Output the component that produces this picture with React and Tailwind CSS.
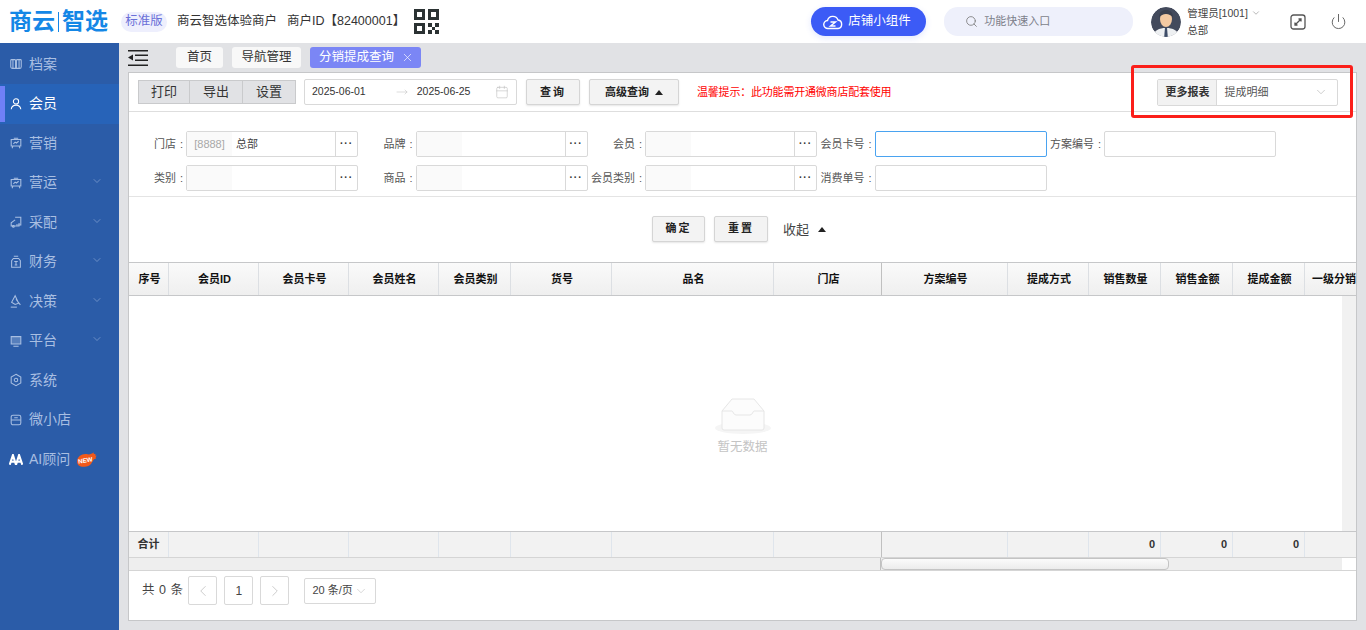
import { ChevronDown, ChevronLeft, ChevronRight, MoveRight, Calendar, Search, X, Power } from 'lucide-react';

// sidebar icons, hand drawn to follow the original glyphs
const icons = {
  file: (
    <>
      <path d="M3 3h3.500a1 1 0 0 1 1 1v9H4a2 2 0 0 1-2-2V4a1 1 0 0 1 1-1zM13 3H9.500a1 1 0 0 0-1 1v9H12a2 2 0 0 0 2-2V4a1 1 0 0 0-1-1z" />
      <path d="M4.500 3v10M11.500 3v10" />
    </>
  ),
  user: (
    <>
      <circle cx="8" cy="5" r="3" />
      <path d="M2.500 14c.5-3 2.800-4.700 5.500-4.700s5 1.700 5.500 4.700" />
    </>
  ),
  board: (
    <>
      <path d="M5.500 2.500h5M2.500 4h11v7.500h-11zM4.500 11.500 3.500 14M11.500 11.500l1 2.500" />
      <path d="m5 9 2-2 1.500 1L11 6" />
    </>
  ),
  bag: (
    <>
      <path d="M7 2.500h6.500v9H8" />
      <path d="M7 5.500 2.500 9v3.500h9V9" />
      <circle cx="5" cy="13" r="1" />
    </>
  ),
  money: (
    <>
      <path d="M5.500 1.500h5M5 4h6l2 2.500V14H3V6.500z" />
      <path d="M6 7.500h4M8 7.500v4M6.500 11.500h3" />
    </>
  ),
  scale: (
    <>
      <path d="M7 2 3 9.500l4 2.500 4-1.500zM8 6l5 6.500" />
      <path d="M2 15h7" />
    </>
  ),
  screen: (
    <>
      <path d="M2.500 3h11v8.500h-11z" fill="currentColor" fillOpacity=".35" />
      <path d="M5 14h6" />
    </>
  ),
  gear: (
    <>
      <path d="M8 1.500 13.500 4.500v7L8 14.500l-5.500-3v-7z" />
      <circle cx="8" cy="8" r="2" />
    </>
  ),
  shop: (
    <>
      <rect x="2.500" y="2.500" width="11" height="11" rx="2" />
      <path d="M2.500 8h11M6 5.500h4" />
    </>
  ),
};

const menu = [
  { name: '档案', icon: 'file' },
  { name: '会员', icon: 'user', active: true },
  { name: '营销', icon: 'board' },
  { name: '营运', icon: 'board', arrow: true },
  { name: '采配', icon: 'bag', arrow: true },
  { name: '财务', icon: 'money', arrow: true },
  { name: '决策', icon: 'scale', arrow: true },
  { name: '平台', icon: 'screen', arrow: true },
  { name: '系统', icon: 'gear' },
  { name: '微小店', icon: 'shop' },
];

const columns = [
  { w: 'w-[40px]', name: '序号', foot: '合计' },
  { w: 'w-[90px]', name: '会员ID' },
  { w: 'w-[90px]', name: '会员卡号' },
  { w: 'w-[90px]', name: '会员姓名' },
  { w: 'w-[72px]', name: '会员类别' },
  { w: 'w-[101px]', name: '货号' },
  { w: 'w-[162px]', name: '品名' },
  { w: 'w-[108px]', name: '门店', frozen: true },
  { w: 'w-[126px]', name: '方案编号' },
  { w: 'w-[81px]', name: '提成方式' },
  { w: 'w-[72px]', name: '销售数量', foot: '0' },
  { w: 'w-[72px]', name: '销售金额', foot: '0' },
  { w: 'w-[72px]', name: '提成金额', foot: '0' },
  { w: 'w-[52px] pl-[5px]', name: '一级分销' },
];

const SideIcon = ({ name }) => (
  <svg viewBox="0 0 16 16" className="w-[14px] h-[14px] shrink-0" fill="none" stroke="currentColor" strokeWidth="1.200">
    {icons[name]}
  </svg>
);

const SideItem = ({ item }) => (
  <div className={`relative flex items-center h-[39.5px] pl-[9px] ${item.active ? 'bg-[#2763b8] text-white' : 'text-[#a9bfe2]'}`}>
    {item.active && <div className="absolute left-0 top-[2px] bottom-[2px] w-[5px] bg-[#6f80f6]" />}
    <SideIcon name={item.icon} />
    <span className="ml-[6px] text-[14px]">{item.name}</span>
    {item.arrow && <ChevronDown size={12} strokeWidth={1} className="absolute left-[91px] top-[12px]" />}
  </div>
);

const Picker = ({ code, value }) => (
  <div className="flex w-[172px] h-[26px] bg-white border border-[#d9d9d9] rounded-[2px] text-[11px]">
    <div className="w-[45px] bg-[#fafafa] text-[#a8a8a8] flex items-center justify-center">{code}</div>
    <div className="flex-1 flex items-center pl-[4px] text-[#444]">{value}</div>
    <div className="w-[22px] border-l border-[#d9d9d9] flex items-center justify-center text-[#333] font-bold tracking-[1px] text-[10px] leading-none">···</div>
  </div>
);

const TextBox = ({ focus }) => (
  <div className={`w-[172px] h-[26px] bg-white border rounded-[2px] ${focus ? 'border-[#4aa3f0]' : 'border-[#d9d9d9]'}`} />
);

const Field = ({ label, children }) => (
  <div className="flex items-center">
    <div className="w-[57px] shrink-0 pr-[3px] flex justify-end text-[11px] text-[#555] whitespace-nowrap">
      {label}<span className="ml-[4px]">:</span>
    </div>
    {children}
  </div>
);

const ActionBtn = ({ children, className }) => (
  <button className={`h-[26px] border border-[#d5d5d5] bg-[#f3f3f3] rounded-[2px] text-[11px] font-bold text-[#222] shadow-[0_1px_2px_rgba(0,0,0,0.1)] ${className}`}>
    {children}
  </button>
);

const Triangle = () => <span className="inline-block w-0 h-0 border-x-[4px] border-x-transparent border-b-[5px] border-b-[#222]" />;

const App = () => {
  return (
    <div className="relative w-[1366px] h-[630px] overflow-hidden flex flex-col bg-[#e1e2e5] text-[#333] font-['Liberation_Sans','Noto_Sans_CJK_SC',sans-serif]">
      {/* top bar */}
      <header className="h-[43px] shrink-0 bg-white flex items-center">
        <div className="ml-[9px] w-[99px] flex items-center text-[#1487e6] text-[23px] font-bold leading-none whitespace-nowrap">
          商云<span className="w-px h-[20px] mx-[3px] bg-[#1487e6]" />智选
        </div>
        <div className="ml-[13px] w-[46px] h-[20px] rounded-full bg-[#eeeffd] text-[#6b70d8] text-[12.500px] flex items-center justify-center">标准版</div>
        <span className="ml-[10px] text-[12.500px] text-[#333]">商云智选体验商户</span>
        <span className="ml-[10px] text-[12.500px] text-[#333] whitespace-nowrap">商户ID【82400001】</span>
        <svg viewBox="0 0 25 25" className="ml-[9px] w-[25px] h-[25px] text-[#2b3233]" fill="currentColor">
          <path fillRule="evenodd" d="M0 0h11v11H0zM3 3v5h5V3zM14 0h11v11H14zM17 3v5h5V3zM0 14h11v11H0zM3 17v5h5v-5z" />
          <path d="M14 14h4v4h-4zM21 14h4v4h-4zM18 18h3v3h-3zM14 21h4v4h-4zM21 21h4v4h-4z" />
        </svg>
        <button className="ml-[372px] w-[115px] h-[29px] rounded-full bg-[#3c5bf6] text-white text-[12.500px] flex items-center pl-[12px] shadow-[0_2px_6px_rgba(60,91,246,0.15)]">
          <svg viewBox="0 0 20 16" className="w-[20px] h-[16px] mr-[5px]" fill="none" stroke="currentColor" strokeWidth="1.400">
            <path d="M5 14.500a4 4 0 0 1-.5-8A5.500 5.500 0 0 1 15 6a4.300 4.300 0 0 1 0 8.500z" />
            <path d="M7.500 8h5l-5 4h5" />
          </svg>
          店铺小组件
        </button>
        <div className="ml-[18px] w-[189px] h-[29px] rounded-[14px] bg-[#eef0fb] flex items-center pl-[21px] text-[11px] text-[#7d7f8a]">
          <Search size={13} strokeWidth={1.500} className="text-[#777] mr-[6px]" />
          功能快速入口
        </div>
        <svg viewBox="0 0 30 30" className="ml-[18px] w-[30px] h-[30px] rounded-full">
          <circle cx="15" cy="15" r="15" fill="#434a5c" />
          <path d="M2 30c1-7 6-9 13-9s12 2 13 9z" fill="#eef0f2" />
          <ellipse cx="15" cy="12" rx="6" ry="8" fill="#f3c9a2" />
          <path d="M8 11c0-6 3-8 7-8s7 2 7 8c-2-3-4-4-7-4s-5 1-7 4z" fill="#3a3f4e" />
          <path d="M14 20.500h2l.8 9.500h-3.600z" fill="#3e4d68" />
        </svg>
        <div className="ml-[6px] w-[89px] text-[10.500px] text-[#444] leading-[17px]">
          <div className="flex items-center whitespace-nowrap">管理员[1001]<ChevronDown size={10} className="ml-[3px] text-[#aaa]" /></div>
          <div>总部</div>
        </div>
        <svg viewBox="0 0 16 16" className="ml-[14px] w-[16px] h-[16px] text-[#555]" fill="none" stroke="currentColor" strokeWidth="1.300">
          <rect x="1" y="1" width="14" height="14" rx="2.500" />
          <path d="M5 11l6-6M8.500 5H11v2.500M5 8.500V11h2.500" />
        </svg>
        <Power size={17} strokeWidth={1.400} className="ml-[24px] text-[#666]" />
      </header>

      <div className="flex flex-1 min-h-0">
        {/* sidebar */}
        <aside className="w-[119px] shrink-0 bg-[#2b5ca8] pt-[1.500px]">
          {menu.map((item) => <SideItem key={item.name} item={item} />)}
          <div className="relative flex items-center h-[39.5px] pl-[9px] text-[#a9bfe2]">
            <svg viewBox="0 0 16 12" className="w-[14px] h-[11px] shrink-0" fill="none" stroke="#fff" strokeWidth="2.400">
              <path d="M.8 12 4.500 1 8 12l3.500-11 3.700 11M2.500 8.500h4M9.500 8.500h4" />
            </svg>
            <span className="ml-[6px] text-[14px] whitespace-nowrap">AI顾问</span>
            <svg viewBox="0 0 21 15" className="w-[22px] h-[16px] ml-[6px]">
              <path d="M1 10c0-5 5-8 10-7 2 .5 4-.5 6-2-.5 1.500 0 2 2 1.500-1 1-1 2 1 2-1.500 1-1.500 2-.5 2.500-2 0-2.500 1-3.500 2.500C14 14 11 15 7 15c-3.500 0-6-1.500-6-5z" fill="#f2591a" />
              <text x="2" y="11" fontSize="6" fontWeight="700" fill="#fff" transform="rotate(-10 8 9)">NEW</text>
            </svg>
          </div>
        </aside>

        <main className="flex-1 min-w-0 flex flex-col pl-[9px] pr-[9px]">
          {/* tab strip */}
          <div className="h-[29px] shrink-0 flex items-center text-[12.500px]">
            <svg viewBox="0 0 20 16" className="w-[20px] h-[16px] text-[#222]" fill="currentColor">
              <path d="M0 0h20v1.500H0zM7 4.500h13V6H7zM7 9.500h13V11H7zM0 14.500h20V16H0zM5 4.500v6L0 7.500z" />
            </svg>
            <div className="ml-[28px] w-[47px] h-[21px] rounded-[3px] bg-[#f8f8f8] flex items-center justify-center">首页</div>
            <div className="ml-[9px] w-[69px] h-[21px] rounded-[3px] bg-[#f8f8f8] flex items-center justify-center">导航管理</div>
            <div className="ml-[9px] w-[111px] h-[21px] rounded-[3px] bg-[#7b86f5] text-white flex items-center pl-[9px]">
              分销提成查询
              <X size={13} strokeWidth={1.200} className="ml-[7px]" />
            </div>
          </div>

          {/* report panel */}
          <section className="h-[549px] flex flex-col border border-[#c6c7c9] bg-white">
            <div className="h-[39px] shrink-0 flex items-center border-b border-[#dedede] pl-[9px]">
              <div className="flex h-[24px] border border-[#c9cacc] bg-[#e1e2e5] text-[13px] divide-x divide-[#c9cacc]">
                <div className="w-[51px] flex items-center justify-center">打印</div>
                <div className="w-[53px] flex items-center justify-center">导出</div>
                <div className="w-[52px] flex items-center justify-center">设置</div>
              </div>
              <div className="ml-[8px] w-[213px] h-[26px] border border-[#d9d9d9] rounded-[2px] flex items-center pl-[7px] text-[10.500px] text-[#333]">
                <span>2025-06-01</span>
                <MoveRight size={12} strokeWidth={1} className="ml-[30px] text-[#bbb]" />
                <span className="ml-[9px]">2025-06-25</span>
                <Calendar size={14} strokeWidth={1} className="ml-[25px] text-[#bbb]" />
              </div>
              <ActionBtn className="ml-[9px] w-[54px] tracking-[2px]">查询</ActionBtn>
              <ActionBtn className="ml-[9px] w-[90px]">
                <span className="flex items-center justify-center gap-[6px]">高级查询 <Triangle /></span>
              </ActionBtn>
              <span className="ml-[18px] text-[11px] tracking-[-0.2px] text-[#f00] whitespace-nowrap">温馨提示：此功能需开通微商店配套使用</span>
              <div className="ml-[266px] flex w-[181px] h-[27px] border border-[#d9d9d9] rounded-[2px] text-[11px]">
                <div className="w-[59px] bg-[#f2f2f2] border-r border-[#d9d9d9] flex items-center justify-center font-bold text-[#333]">更多报表</div>
                <div className="flex-1 flex items-center pl-[7px] text-[#555]">提成明细</div>
                <ChevronDown size={14} strokeWidth={1} className="self-center mr-[9px] text-[#aaa]" />
              </div>
            </div>

            {/* filter form */}
            <div className="h-[85px] shrink-0 border-b border-[#e4e4e4] pt-[15px] grid grid-cols-[repeat(5,229.5px)] auto-rows-[34px] content-start">
              <Field label="门店"><Picker code="[8888]" value="总部" /></Field>
              <Field label="品牌"><Picker /></Field>
              <Field label="会员"><Picker /></Field>
              <Field label="会员卡号"><TextBox focus /></Field>
              <Field label="方案编号"><TextBox /></Field>
              <Field label="类别"><Picker /></Field>
              <Field label="商品"><Picker /></Field>
              <Field label="会员类别"><Picker /></Field>
              <Field label="消费单号"><TextBox /></Field>
            </div>

            <div className="h-[65px] shrink-0 flex items-center pl-[523px] pb-[2px]">
              <ActionBtn className="w-[53px] tracking-[2px]">确定</ActionBtn>
              <ActionBtn className="ml-[9px] w-[54px] tracking-[2px]">重置</ActionBtn>
              <span className="ml-[15px] mt-[2px] text-[13px] text-[#444]">收起</span>
              <span className="ml-[9px] mt-[2px] flex"><Triangle /></span>
            </div>

            {/* table */}
            <div className="h-[34px] shrink-0 flex overflow-hidden border-y border-[#c6c7c9] bg-gradient-to-b from-[#fafafa] to-[#efefef]">
              {columns.map((c) => (
                <div key={c.name} className={`${c.w} shrink-0 flex items-center justify-center text-[11px] font-bold text-[#111] whitespace-nowrap border-r ${c.frozen ? 'border-[#c0c0c0]' : 'border-[#dcdfe3]'}`}>
                  <span className="ml-[2px]">{c.name}</span>
                </div>
              ))}
            </div>
            <div className="h-[235px] shrink-0 flex">
              <div className="flex-1 flex flex-col items-center justify-center pl-[14px] pt-[24px]">
                <svg viewBox="0 0 60 40" className="w-[60px] h-[40px]">
                  <ellipse cx="30" cy="33" rx="28" ry="6" fill="#f5f5f5" />
                  <path d="M9 16 19 4h22l10 12v17a2 2 0 0 1-2 2H11a2 2 0 0 1-2-2z" fill="#fcfcfc" stroke="#e6e6e6" />
                  <path d="M9 16h10c1 0 1.500 4 4 4h14c2.500 0 3-4 4-4h10" fill="none" stroke="#e6e6e6" />
                </svg>
                <span className="mt-[3px] text-[12.500px] text-[#c4c4c4]">暂无数据</span>
              </div>
              <div className="w-[14px] shrink-0 bg-[#f1f1f1]" />
            </div>
            <div className="h-[26px] shrink-0 flex overflow-hidden border-t border-[#c6c7c9] bg-[#f2f2f2]">
              {columns.map((c) => (
                <div key={c.name} className={`${c.w} shrink-0 flex items-center text-[11px] font-bold border-r ${c.foot === '合计' ? 'justify-center' : 'justify-end pr-[5px]'} ${c.frozen ? 'border-[#c0c0c0]' : 'border-[#dfe5ec]'}`}>
                  {c.foot}
                </div>
              ))}
            </div>
            <div className="h-[14px] shrink-0 flex border-y border-[#d5d5d5] bg-[#eeeeee]">
              <div className="w-[752px] shrink-0 border-r border-[#c0c0c0]" />
              <div className="w-[288px] rounded-[4px] border border-[#c4c4c4] bg-gradient-to-b from-[#fbfbfb] to-[#ececec]" />
              <div className="flex-1" />
              <div className="w-[14px] bg-white" />
            </div>

            {/* paging */}
            <div className="flex-1 flex items-center pl-[13px] pb-[10px] text-[12.500px] text-[#444]">
              <span className="tracking-[0.5px] whitespace-nowrap">共 0 条</span>
              <div className="ml-[5px] w-[29px] h-[29px] border border-[#d9d9d9] rounded-[2px] flex items-center justify-center text-[#bbb]"><ChevronLeft size={18} strokeWidth={1} /></div>
              <div className="ml-[7px] w-[29px] h-[29px] border border-[#d9d9d9] rounded-[2px] flex items-center justify-center text-[12px]">1</div>
              <div className="ml-[7px] w-[29px] h-[29px] border border-[#d9d9d9] rounded-[2px] flex items-center justify-center text-[#bbb]"><ChevronRight size={18} strokeWidth={1} /></div>
              <div className="ml-[15px] w-[72px] h-[26px] border border-[#d9d9d9] rounded-[2px] flex items-center pl-[7px] text-[11px] whitespace-nowrap">
                20 条/页
                <ChevronDown size={14} strokeWidth={1} className="ml-[1px] text-[#bbb]" />
              </div>
            </div>
          </section>
        </main>
      </div>

      {/* red annotation box drawn over the screenshot */}
      <div className="absolute left-[1131px] top-[65px] w-[222px] h-[53px] border-[3px] border-[#fb1f1a] rounded-[3px]" />
    </div>
  );
};

export default App;
